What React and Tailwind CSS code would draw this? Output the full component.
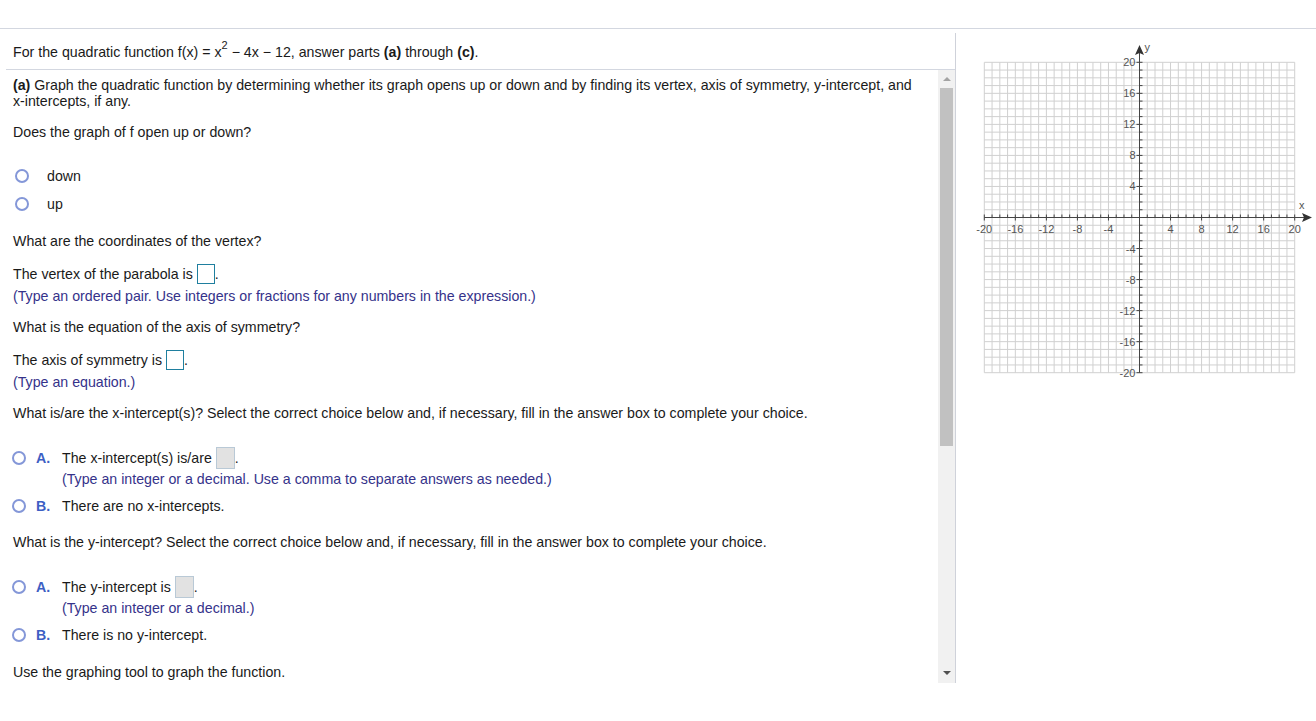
import React from "react";

const U = 7.76;
const X0 = 28.3;
const Y0 = 33.3;
const CX = X0 + 20 * U;
const CY = Y0 + 20 * U;

function Graph() {
  const lines = [];
  for (let i = 0; i <= 40; i++) {
    const p = X0 + i * U;
    lines.push(<line key={"v" + i} x1={p} y1={Y0} x2={p} y2={Y0 + 40 * U} stroke="#d0d0d0" strokeWidth="1" />);
    const q = Y0 + i * U;
    lines.push(<line key={"h" + i} x1={X0} y1={q} x2={X0 + 40 * U} y2={q} stroke="#d0d0d0" strokeWidth="1" />);
  }
  const ticks = [];
  const labels = [];
  for (let i = -20; i <= 20; i++) {
    if (i === 0) continue;
    const x = CX + i * U;
    const y = CY - i * U;
    const major = i % 4 === 0;
    ticks.push(<line key={"tx" + i} x1={x} y1={CY - 3} x2={x} y2={major ? CY + 3 : CY} stroke="#444" strokeWidth="1" />);
    ticks.push(<line key={"ty" + i} x1={major ? CX - 3 : CX} y1={y} x2={CX + 3} y2={y} stroke="#444" strokeWidth="1" />);
    if (major) {
      labels.push(
        <text key={"lx" + i} x={x} y={CY + 15} textAnchor="middle" fontSize="11" fill="#555" fontFamily="Liberation Sans, Arial, sans-serif">{i}</text>
      );
      labels.push(
        <text key={"ly" + i} x={CX - 4} y={y + 4} textAnchor="end" fontSize="11" fill="#555" fontFamily="Liberation Sans, Arial, sans-serif">{i}</text>
      );
    }
  }
  return (
    <svg width="360" height="360" viewBox="0 0 360 360">
      <rect x={X0} y={Y0} width={40 * U} height={40 * U} fill="#fff" />
      {lines}
      <line x1={X0} y1={CY} x2={352} y2={CY} stroke="#444" strokeWidth="1" />
      <line x1={CX} y1={Y0 + 40 * U} x2={CX} y2={20} stroke="#444" strokeWidth="1" />
      <polygon points={`${356},${CY} ${346},${CY - 4.5} ${348},${CY} ${346},${CY + 4.5}`} fill="#333" />
      <polygon points={`${CX},${16} ${CX - 4.5},${26} ${CX},${24} ${CX + 4.5},${26}`} fill="#333" />
      {ticks}
      {labels}
      <text x={CX + 5} y={22} fontSize="11" fill="#555" fontFamily="Liberation Sans, Arial, sans-serif">y</text>
      <text x={343} y={180} fontSize="11" fill="#555" fontFamily="Liberation Sans, Arial, sans-serif">x</text>
    </svg>
  );
}

function Radio() {
  return <span className="inline-block w-[14px] h-[14px] rounded-full border-2 border-[#8497d8] bg-white shrink-0" />;
}

function Instr({ children, className = "" }) {
  return <div className={"leading-[16px] text-[#35328a] " + className}>{children}</div>;
}

function BlankBox() {
  return <span className="inline-block w-[18px] h-[20px] border-[1.5px] border-[#1f7f9f] bg-white align-middle" />;
}

function GrayBox() {
  return <span className="inline-block w-[19px] h-[22px] border border-[#b9c9d6] bg-[#e2e2e2] align-middle" />;
}

function Choice({ letter, children }) {
  return (
    <div className="flex items-center h-[22px]">
      <span className="w-[36px] flex justify-center pl-[2px]"><Radio /></span>
      <span className="w-[26px] font-bold text-[#3d5fc4]">{letter}.</span>
      <span className="flex items-center">{children}</span>
    </div>
  );
}

export default function App() {
  return (
    <div
      className="w-[1316px] h-[721px] bg-white text-[14.2px] text-[#1a1a1a] overflow-hidden"
      style={{ fontFamily: '"Liberation Sans", Arial, sans-serif' }}
    >
      <div className="h-[28px]" />
      <div className="border-t border-[#d3d7e0] flex">
        <div className="w-[956px] mt-[4px] h-[650px] border-r border-[#cfd2da] flex flex-col">
          <div className="h-[36px] flex items-center pl-[13px] pt-[3px]">
            <span>
              For the quadratic function f(x) = x<sup className="text-[11px] top-[-0.7em]">2</sup> − 4x − 12, answer parts <b>(a)</b> through <b>(c)</b>.
            </span>
          </div>
          <div className="ml-[6px] border-t border-[#d3d7e0]" />
          <div className="flex flex-1 min-h-0">
            <div className="flex-1 pl-[13px] leading-[16px]">
              <div className="mt-[7px] pr-[10px]">
                <b>(a)</b> Graph the quadratic function by determining whether its graph opens up or down and by finding its vertex, axis of symmetry, y-intercept, and<br />x-intercepts, if any.
              </div>
              <div className="mt-[15px]">Does the graph of f open up or down?</div>
              <div className="mt-[26px] h-[20px] flex items-center">
                <span className="w-[17px] flex justify-center"><Radio /></span>
                <span className="ml-[17px]">down</span>
              </div>
              <div className="mt-[8px] h-[20px] flex items-center">
                <span className="w-[17px] flex justify-center"><Radio /></span>
                <span className="ml-[17px]">up</span>
              </div>
              <div className="mt-[19px]">What are the coordinates of the vertex?</div>
              <div className="mt-[15px] h-[20px] flex items-center">
                The vertex of the parabola is&nbsp;<BlankBox />.
              </div>
              <Instr className="mt-[4px]">(Type an ordered pair. Use integers or fractions for any numbers in the expression.)</Instr>
              <div className="mt-[15px]">What is the equation of the axis of symmetry?</div>
              <div className="mt-[15px] h-[20px] flex items-center">
                The axis of symmetry is&nbsp;<BlankBox />.
              </div>
              <Instr className="mt-[4px]">(Type an equation.)</Instr>
              <div className="mt-[15px]">What is/are the x-intercept(s)? Select the correct choice below and, if necessary, fill in the answer box to complete your choice.</div>
              <div className="mt-[26px] -ml-[13px]">
                <Choice letter="A">The x-intercept(s) is/are&nbsp;<GrayBox />.</Choice>
                <Instr className="mt-[2px] ml-[62px]">(Type an integer or a decimal. Use a comma to separate answers as needed.)</Instr>
                <div className="mt-[8px]">
                  <Choice letter="B">There are no x-intercepts.</Choice>
                </div>
              </div>
              <div className="mt-[17px]">What is the y-intercept? Select the correct choice below and, if necessary, fill in the answer box to complete your choice.</div>
              <div className="mt-[26px] -ml-[13px]">
                <Choice letter="A">The y-intercept is&nbsp;<GrayBox />.</Choice>
                <Instr className="mt-[2px] ml-[62px]">(Type an integer or a decimal.)</Instr>
                <div className="mt-[8px]">
                  <Choice letter="B">There is no y-intercept.</Choice>
                </div>
              </div>
              <div className="mt-[18px]">Use the graphing tool to graph the function.</div>
            </div>
            <div className="w-[17px] bg-[#f1f1f1] flex flex-col items-center">
              <div className="h-[18px] flex items-center justify-center">
                <span className="w-0 h-0 border-l-[4px] border-r-[4px] border-b-[4px] border-l-transparent border-r-transparent border-b-[#a3a3a3]" />
              </div>
              <div className="w-[13px] h-[358px] bg-[#c1c1c1]" />
              <div className="flex-1" />
              <div className="h-[20px] flex items-center justify-center">
                <span className="w-0 h-0 border-l-[4px] border-r-[4px] border-t-[4px] border-l-transparent border-r-transparent border-t-[#505050]" />
              </div>
            </div>
          </div>
        </div>
        <div className="flex-1">
          <Graph />
        </div>
      </div>
    </div>
  );
}
